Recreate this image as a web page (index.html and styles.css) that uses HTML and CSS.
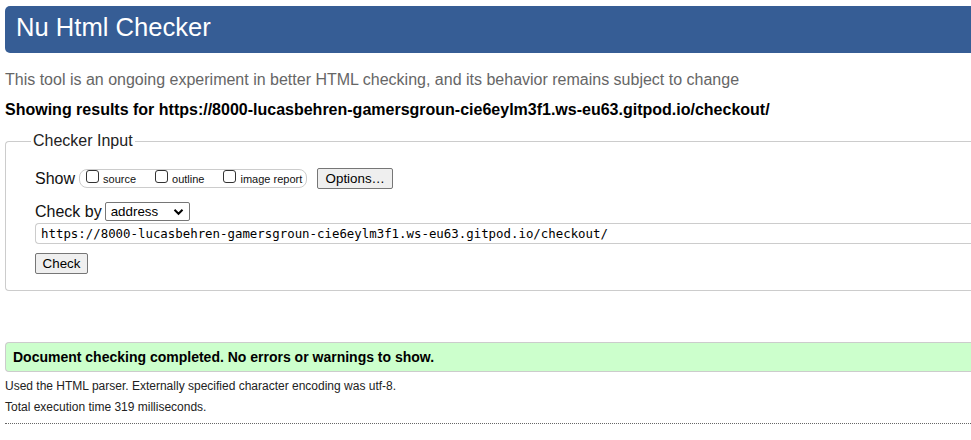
FILE: index.html
```html
<!DOCTYPE html>
<html>
<head>
<meta charset="utf-8">
<title>Nu Html Checker</title>
<link rel="stylesheet" href="styles.css">
</head>
<body>
<main class="page">
  <h1 class="title">Nu Html Checker</h1>
  <p class="intro">This tool is an ongoing experiment in better HTML checking, and its behavior remains subject to change</p>
  <p class="showing">Showing results for https://8000-lucasbehren-gamersgroun-cie6eylm3f1.ws-eu63.gitpod.io/checkout/</p>
  <form class="form">
    <fieldset class="fieldset">
      <legend class="legend">Checker Input</legend>
      <div class="row show-row">
        <span class="label">Show</span>
        <span class="show-box"><label class="opt"><input type="checkbox" class="cb">source</label><label class="opt"><input type="checkbox" class="cb">outline</label><label class="opt"><input type="checkbox" class="cb">image report</label></span>
        <button type="button" class="btn options">Options…</button>
      </div>
      <div class="row by-row">
        <span class="label">Check by</span>
        <span class="select"><span>address</span><svg class="chev" width="11" height="8" viewBox="0 0 11 8"><path d="M1.5 1.8 L5.5 5.8 L9.5 1.8" fill="none" stroke="#000" stroke-width="2"/></svg></span>
      </div>
      <div class="url">https://8000-lucasbehren-gamersgroun-cie6eylm3f1.ws-eu63.gitpod.io/checkout/</div>
      <div class="row check-row"><button type="button" class="btn check">Check</button></div>
    </fieldset>
  </form>
  <p class="success">Document checking completed. No errors or warnings to show.</p>
  <p class="meta">Used the HTML parser. Externally specified character encoding was utf-8.</p>
  <p class="meta meta-2">Total execution time 319 milliseconds.</p>
  <hr class="rule">
</main>
</body>
</html>
```
FILE: styles.css
```css
html, body {
  margin: 0;
  padding: 0;
  overflow: hidden;
  background: #fff;
}
body {
  font-family: "Liberation Sans", Arial, sans-serif;
  color: #000;
  padding: 6px 0 0 5px;
}
.page {
  width: 1000px;
}
.title {
  margin: 0;
  height: 47px;
  box-sizing: border-box;
  background: #365d95;
  color: #fff;
  font-weight: normal;
  font-size: 25.6px;
  line-height: 42px;
  padding-left: 11px;
  border-radius: 5px 0 0 5px;
}
.intro {
  margin: 18px 0 0;
  font-size: 16px;
  line-height: 18px;
  color: #666;
}
.showing {
  margin: 12px 0 0;
  font-size: 16px;
  line-height: 18px;
  font-weight: bold;
  color: #000;
}
.form {
  margin: 13px 0 0;
}
.fieldset {
  margin: 0;
  border: 1px solid #ccc;
  border-right: none;
  border-radius: 4px 0 0 4px;
  padding: 18px 0 16px 29px;
}
.legend {
  font-size: 16px;
  line-height: 18px;
  padding: 0 2px;
  margin-left: -4px;
  color: #222;
}
.row {
  display: flex;
  align-items: center;
}
.label {
  font-size: 16px;
  line-height: 18px;
  color: #111;
}
.show-row {
  height: 21px;
}
.show-box {
  display: inline-block;
  margin-left: 4px;
  height: 19px;
  box-sizing: border-box;
  border: 1px solid #ccc;
  border-radius: 8px;
  padding: 0 4px 0 6px;
  font-size: 11px;
  line-height: 17px;
  white-space: nowrap;
}
.opt {
  display: inline;
  color: #111;
}
.opt + .opt {
  margin-left: 19px;
}
.cb {
  display: inline-block;
  vertical-align: baseline;
  width: 13px;
  height: 13px;
  margin: 0 4px 0 0;
  appearance: none;
  border: 1px solid #333;
  border-radius: 3px;
  background: #fff;
  box-sizing: border-box;
}
.btn {
  font-family: "Liberation Sans", Arial, sans-serif;
  font-size: 13.33px;
  background: #efefef;
  border: 1px solid #767676;
  border-radius: 2px;
  color: #000;
  padding: 0;
  height: 21px;
}
.options {
  margin-left: 10px;
  width: 76px;
}
.by-row {
  margin-top: 13px;
  height: 19px;
}
.select {
  display: inline-flex;
  align-items: center;
  justify-content: space-between;
  margin-left: 3px;
  width: 85px;
  height: 19px;
  box-sizing: border-box;
  border: 1px solid #767676;
  border-radius: 2px;
  padding: 0 5px 0 5px;
  font-size: 13.33px;
}
.url {
  margin-top: 2px;
  height: 21px;
  box-sizing: border-box;
  border: 1px solid #ccc;
  border-right: none;
  border-radius: 4px 0 0 4px;
  font-family: "DejaVu Sans Mono", "Liberation Mono", monospace;
  font-size: 12.4px;
  line-height: 19px;
  padding-left: 5px;
  color: #000;
}
.check-row {
  margin-top: 9px;
}
.check {
  width: 53px;
}
.success {
  margin: 51px 0 0;
  height: 30px;
  box-sizing: border-box;
  background: #cfc;
  border: 1px solid #ccc;
  border-right: none;
  border-radius: 4px 0 0 4px;
  font-weight: bold;
  font-size: 14px;
  line-height: 28px;
  padding-left: 7px;
}
.meta {
  margin: 7px 0 0;
  font-size: 12px;
  line-height: 14px;
  color: #222;
}
.rule {
  margin: 9px 0 0;
  border: none;
  border-top: 1px dotted #666;
}
```
